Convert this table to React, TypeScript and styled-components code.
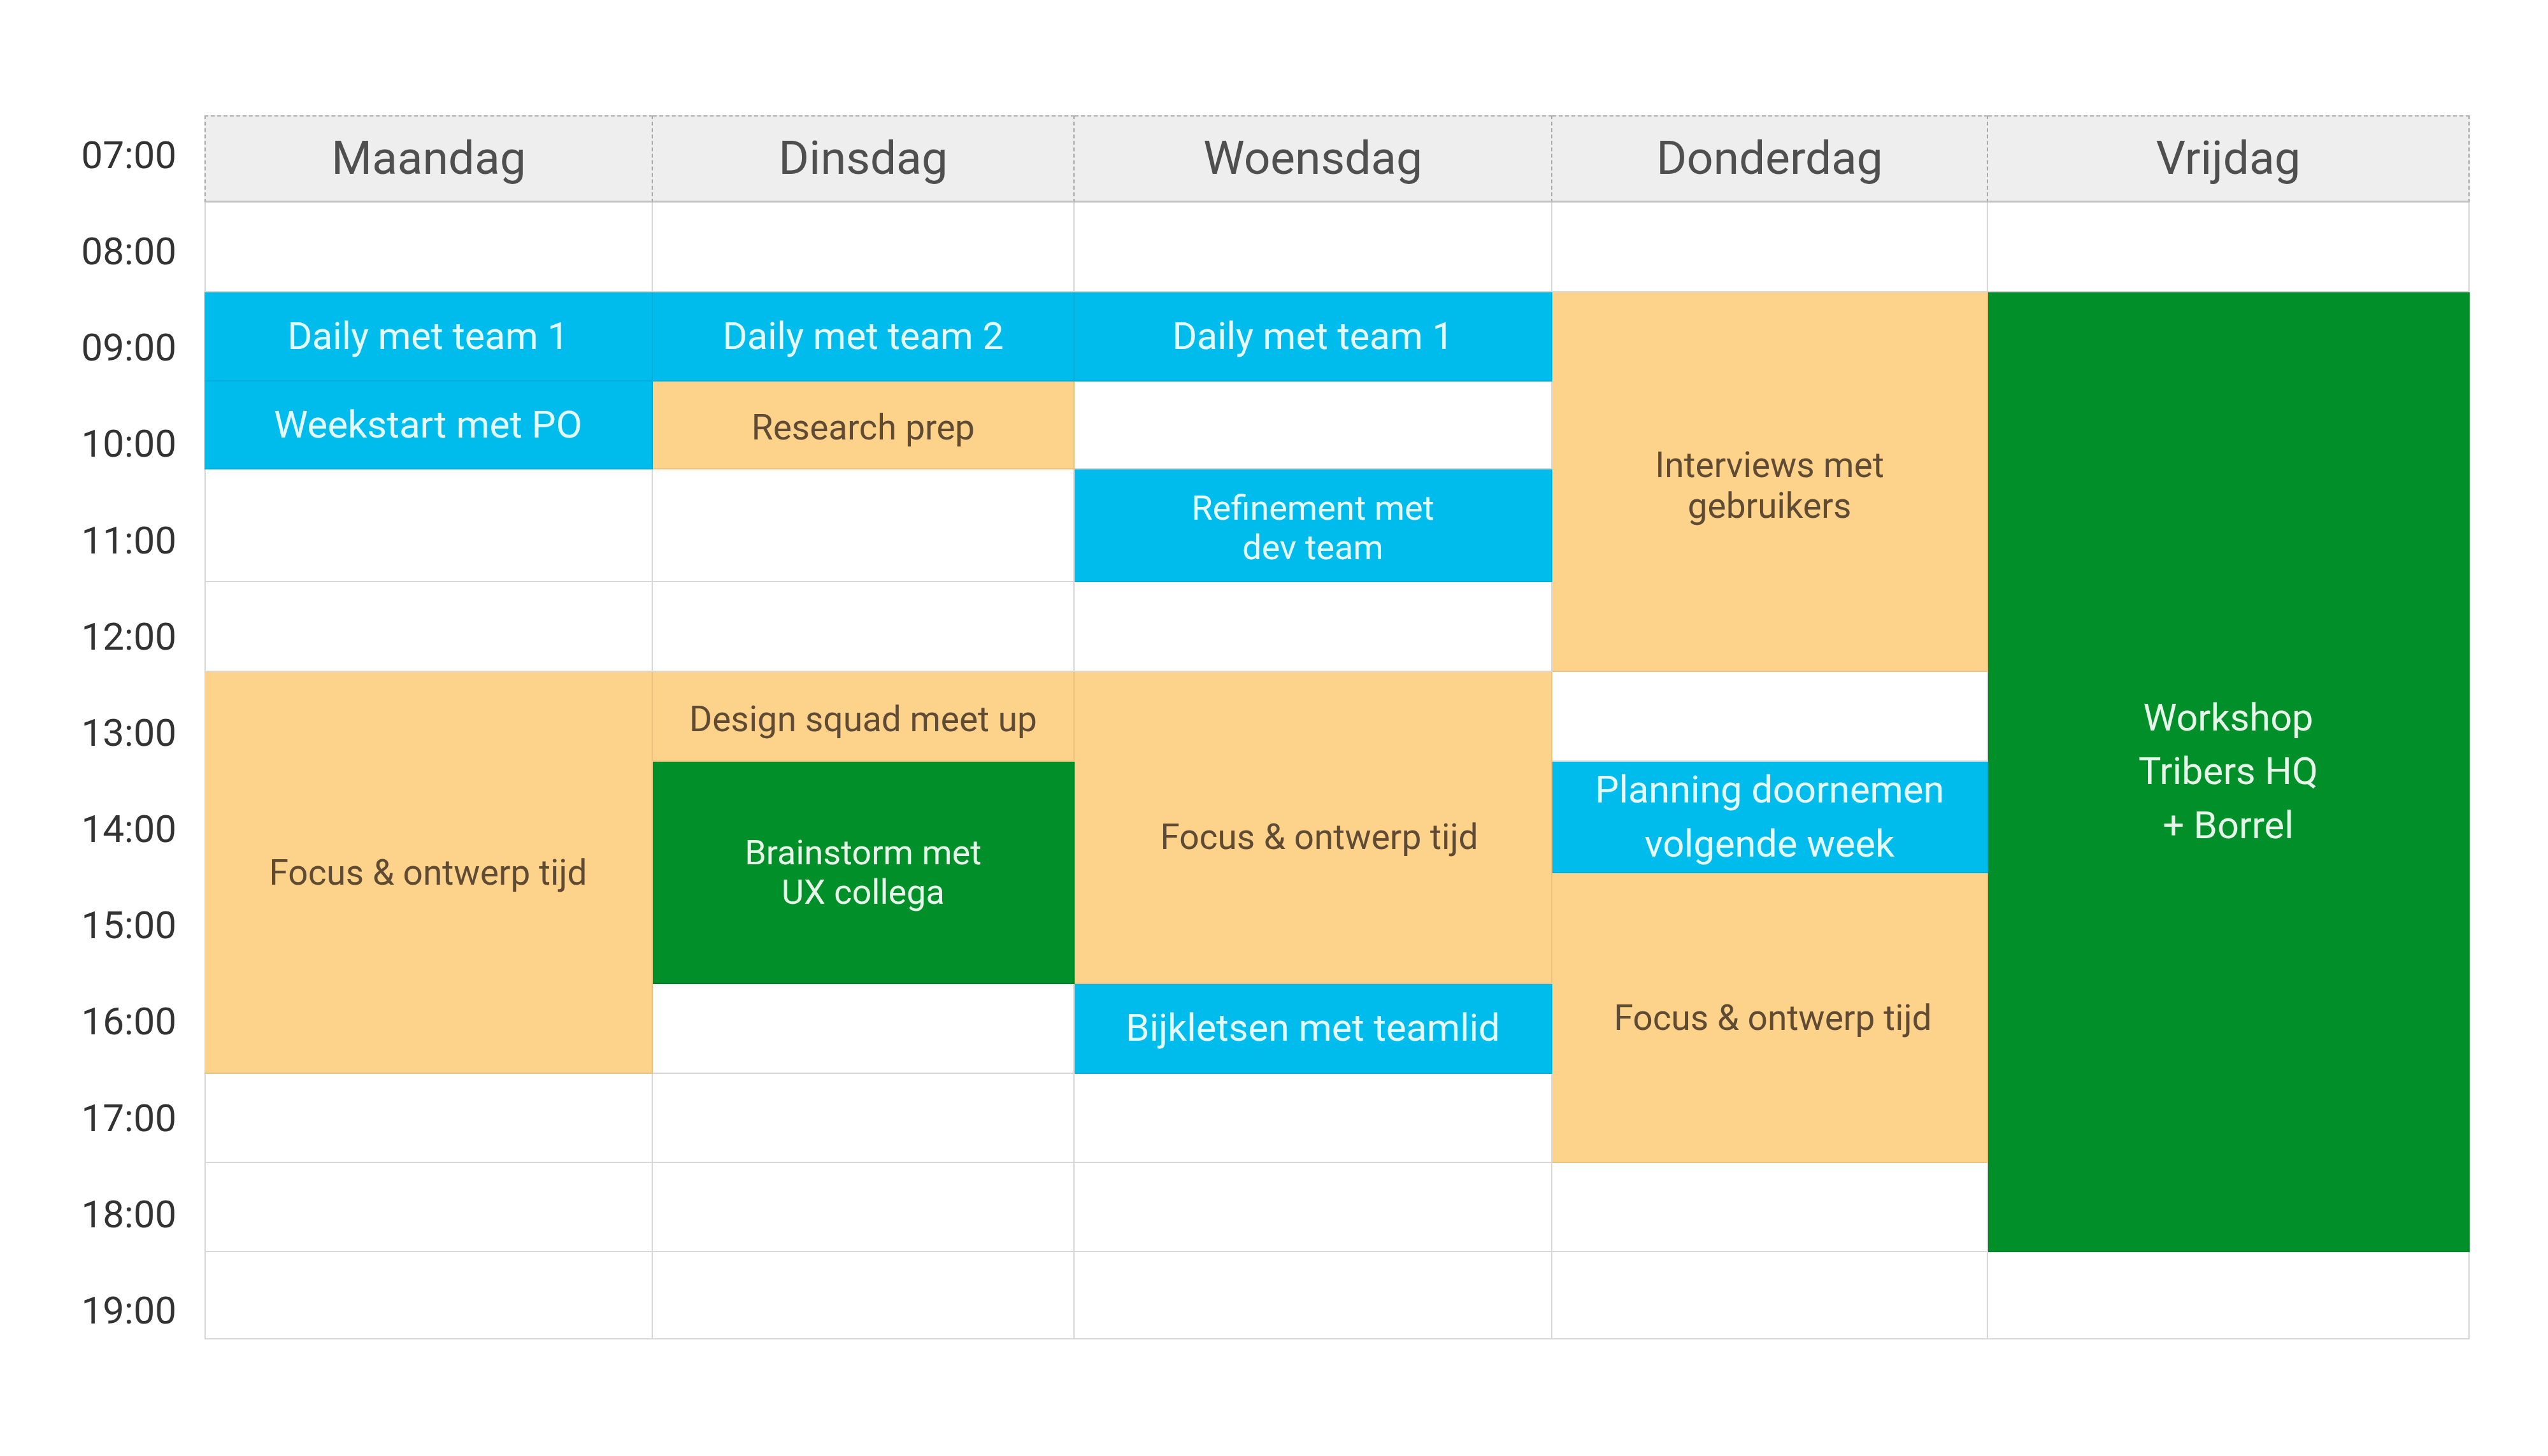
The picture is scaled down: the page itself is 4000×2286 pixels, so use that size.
import React from "react";
import styled, { createGlobalStyle } from "styled-components";

type Kind = "blue" | "orange" | "green";

interface EventItem {
  col: number;
  row: number;
  span: number;
  kind: Kind;
  lines: string[];
  size: number;
  lh: number;
  dx?: number;
  dy?: number;
}

const days = ["Maandag", "Dinsdag", "Woensdag", "Donderdag", "Vrijdag"];
const hours = [
  "07:00", "08:00", "09:00", "10:00", "11:00", "12:00", "13:00",
  "14:00", "15:00", "16:00", "17:00", "18:00", "19:00",
];

// rows: 08:00 = 2 ... 19:00 = 13 (row 1 is the header)
const events: EventItem[] = [
  { col: 1, row: 3, span: 1, kind: "blue", lines: ["Daily met team 1"], size: 59, lh: 1.2 },
  { col: 1, row: 4, span: 1, kind: "blue", lines: ["Weekstart met PO"], size: 60, lh: 1.2 },
  { col: 1, row: 7, span: 4, kind: "orange", lines: ["Focus & ontwerp tijd"], size: 55, lh: 1.2 },
  { col: 2, row: 3, span: 1, kind: "blue", lines: ["Daily met team 2"], size: 59, lh: 1.2 },
  { col: 2, row: 4, span: 1, kind: "orange", lines: ["Research prep"], size: 55, lh: 1.2, dy: 4 },
  { col: 2, row: 7, span: 1, kind: "orange", lines: ["Design squad meet up"], size: 55, lh: 1.2, dy: 4 },
  { col: 2, row: 8, span: 2, kind: "green", lines: ["Brainstorm met", "UX collega"], size: 54, lh: 1.13 },
  { col: 3, row: 3, span: 1, kind: "blue", lines: ["Daily met team 1"], size: 59, lh: 1.2 },
  { col: 3, row: 5, span: 1, kind: "blue", lines: ["Refinement met", "dev team"], size: 54, lh: 1.13, dy: 4 },
  { col: 3, row: 7, span: 3, kind: "orange", lines: ["Focus & ontwerp tijd"], size: 55, lh: 1.2, dx: 10, dy: 15 },
  { col: 3, row: 10, span: 1, kind: "blue", lines: ["Bijkletsen met teamlid"], size: 59.5, lh: 1.2 },
  { col: 4, row: 3, span: 4, kind: "orange", lines: ["Interviews met", "gebruikers"], size: 55, lh: 1.16, dy: 7 },
  { col: 4, row: 8, span: 1, kind: "blue", lines: ["Planning doornemen", "volgende week"], size: 59.5, lh: 1.42 },
  { col: 4, row: 9, span: 3, kind: "orange", lines: ["Focus & ontwerp tijd"], size: 55, lh: 1.2, dx: 5 },
  { col: 5, row: 3, span: 10, kind: "green", lines: ["Workshop", "Tribers HQ", "+ Borrel"], size: 59.5, lh: 1.42 },
];

const palette: Record<Kind, { bg: string; fg: string }> = {
  blue: { bg: "#00bcec", fg: "#e4fbfb" },
  orange: { bg: "#fdd28a", fg: "#5f4a33" },
  green: { bg: "#008f29", fg: "#e6f6e8" },
};

const App: React.FC = () => {
  return (
    <>
      <GlobalStyle />
      <Page>
        <TimeColumn>
          {hours.map((h) => (
            <TimeLabel key={h}>{h}</TimeLabel>
          ))}
        </TimeColumn>
        <Schedule>
          {days.map((d, i) => (
            <DayHeader key={d} $first={i === 0}>
              {d}
            </DayHeader>
          ))}
          {hours.slice(1).map((h, r) =>
            days.map((d, c) => (
              <Cell
                key={`${h}-${d}`}
                $first={c === 0}
                style={{ gridColumn: c + 1, gridRow: r + 2 }}
              />
            ))
          )}
          {events.map((e, i) => (
            <EventBlock
              key={i}
              $kind={e.kind}
              $dx={e.dx ?? 0}
              $dy={e.dy ?? 0}
              style={{ gridColumn: e.col, gridRow: `${e.row} / span ${e.span}` }}
            >
              <EventText $size={e.size} $lh={e.lh}>
                {e.lines.map((l, j) => (
                  <React.Fragment key={j}>
                    {j > 0 && <br />}
                    {l}
                  </React.Fragment>
                ))}
              </EventText>
            </EventBlock>
          ))}
        </Schedule>
      </Page>
    </>
  );
};
export default App;

const GlobalStyle = createGlobalStyle`
  html, body {
    margin: 0;
    padding: 0;
    background: #ffffff;
  }
  body {
    font-family: Roboto, "Noto Sans", Arial, sans-serif;
  }
`;

const Page = styled.div`
  display: flex;
  align-items: flex-start;
  width: 4000px;
  height: 2286px;
  padding-top: 168px;
  box-sizing: border-box;
`;

const TimeColumn = styled.div`
  display: flex;
  flex-direction: column;
  width: 277px;
  margin-right: 44px;
`;

const TimeLabel = styled.div`
  height: 151.17px;
  line-height: 151.17px;
  text-align: right;
  font-size: 60px;
  color: #333333;
`;

const Schedule = styled.div`
  display: grid;
  margin-top: 13px;
  grid-template-columns: 704px 662px 750px 684px 756px;
  grid-template-rows: 137px 141px 140px 138px 177px 141px 141px 175px 174px 141px 140px 140px 137px;
`;

const DayHeader = styled.div<{ $first: boolean }>`
  display: flex;
  align-items: center;
  justify-content: center;
  box-sizing: border-box;
  background: #eeeeee;
  border-top: 2px dashed #b0b0b0;
  border-right: 2px dashed #a8a8a8;
  border-left: ${(p) => (p.$first ? "2px dashed #a8a8a8" : "none")};
  border-bottom: 3px solid #c4c4c4;
  font-size: 73px;
  color: #4f4f4f;
  padding-bottom: 2px;
`;

const Cell = styled.div<{ $first: boolean }>`
  box-sizing: border-box;
  background: #ffffff;
  border-right: 2px solid #d8d8d8;
  border-bottom: 2px solid #d8d8d8;
  border-left: ${(p) => (p.$first ? "2px solid #d8d8d8" : "none")};
`;

const EventBlock = styled.div<{ $kind: Kind; $dx: number; $dy: number }>`
  position: relative;
  z-index: 1;
  display: flex;
  align-items: center;
  justify-content: center;
  box-sizing: border-box;
  padding-left: ${(p) => p.$dx * 2}px;
  padding-top: ${(p) => p.$dy * 2}px;
  background: ${(p) => palette[p.$kind].bg};
  color: ${(p) => palette[p.$kind].fg};
  border-bottom: 2px solid rgba(0, 0, 0, 0.07);
  border-right: 2px solid rgba(0, 0, 0, 0.07);
  text-align: center;
`;

const EventText = styled.div<{ $size: number; $lh: number }>`
  font-size: ${(p) => p.$size}px;
  line-height: ${(p) => p.$lh};
  white-space: nowrap;
`;
